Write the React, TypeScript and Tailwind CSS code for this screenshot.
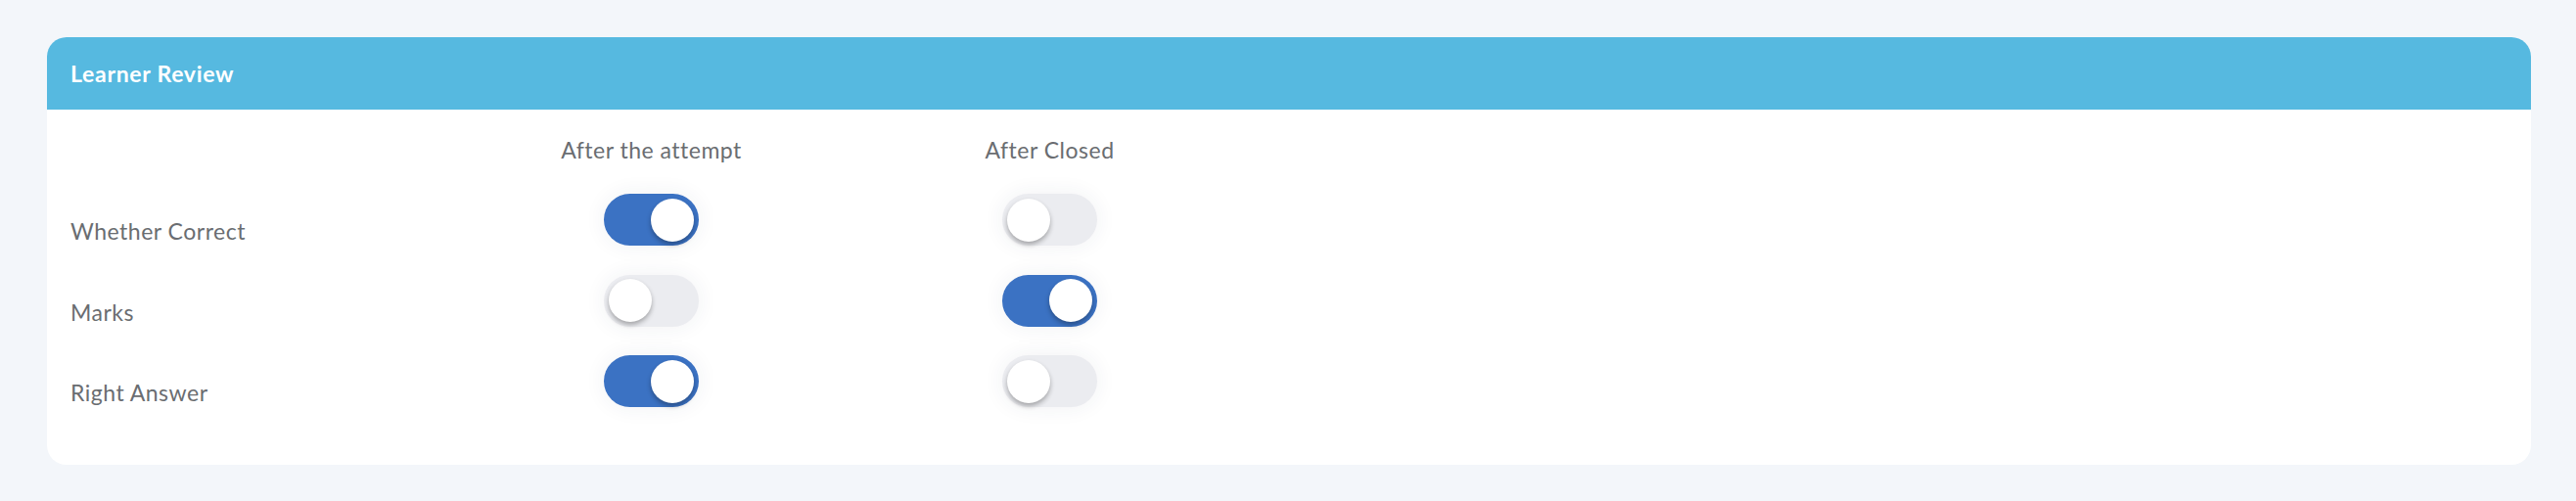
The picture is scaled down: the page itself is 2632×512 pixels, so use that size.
import React, { useState } from 'react';

interface ReviewRow {
  label: string;
  afterAttempt: boolean;
  afterClosed: boolean;
}

const initialRows: ReviewRow[] = [
  { label: 'Whether Correct', afterAttempt: true, afterClosed: false },
  { label: 'Marks', afterAttempt: false, afterClosed: true },
  { label: 'Right Answer', afterAttempt: true, afterClosed: false },
];

function Toggle({ checked, onChange }: { checked: boolean; onChange: () => void }) {
  return (
    <button
      type="button"
      role="switch"
      aria-checked={checked}
      onClick={onChange}
      className={`flex h-[53px] w-[97px] items-center rounded-full px-[5px] shadow-[0_0_22px_rgba(40,60,90,0.07)] ${
        checked ? 'justify-end bg-[#3b72c3]' : 'justify-start bg-[#ebecf0]'
      }`}
    >
      <span className="block h-[44px] w-[44px] rounded-full bg-white shadow-[0_3px_5px_rgba(0,0,0,0.3)]" />
    </button>
  );
}

export default function App() {
  const [rows, setRows] = useState(initialRows);

  const flip = (i: number, key: 'afterAttempt' | 'afterClosed') => {
    setRows((prev) => prev.map((r, idx) => (idx === i ? { ...r, [key]: !r[key] } : r)));
  };

  return (
    <div className="min-h-[512px] w-full bg-[#f3f6fa] pt-[38px] font-['Lato','Liberation_Sans',sans-serif] tracking-[0.5px]">
      <div className="ml-[48px] w-[2538px] rounded-[20px] bg-white">
        {/* Header */}
        <div className="flex h-[74px] items-center rounded-t-[20px] bg-[#56b9e0] px-[24px]">
          <h2 className="text-[23px] font-bold leading-[22px] tracking-[0.7px] text-white">Learner Review</h2>
        </div>

        {/* Body */}
        <div className="px-[24px] pb-[29px] pt-[30px] text-[23px] leading-[22px] text-[#6a6d71]">
          <div className="flex h-[56px] items-start">
            <div className="w-[390px]" />
            <div className="w-[407px] text-center">After the attempt</div>
            <div className="w-[407px] text-center">After Closed</div>
          </div>

          {rows.map((row, i) => (
            <div key={row.label} className="flex h-[82.5px] items-start">
              <div className="mt-[27px] w-[390px]">{row.label}</div>
              <div className="flex w-[407px] justify-center">
                <Toggle checked={row.afterAttempt} onChange={() => flip(i, 'afterAttempt')} />
              </div>
              <div className="flex w-[407px] justify-center">
                <Toggle checked={row.afterClosed} onChange={() => flip(i, 'afterClosed')} />
              </div>
            </div>
          ))}
        </div>
      </div>
    </div>
  );
}
